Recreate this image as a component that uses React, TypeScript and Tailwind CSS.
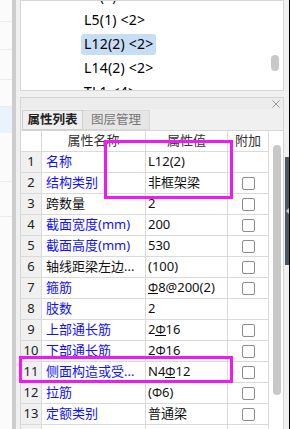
import React from "react";

type Row = { n: number; name: string; blue: boolean; value: React.ReactNode; cb: boolean };

const G = () => (
  <span className="inline-block leading-[11px] border-b border-black" style={{ fontSize: "12px" }}>Φ</span>
);
const P = () => <span style={{ fontSize: "12px" }}>Φ</span>;

const rows: Row[] = [
  { n: 1, name: "名称", blue: true, value: "L12(2)", cb: false },
  { n: 2, name: "结构类别", blue: true, value: "非框架梁", cb: true },
  { n: 3, name: "跨数量", blue: false, value: "2", cb: true },
  { n: 4, name: "截面宽度(mm)", blue: true, value: "200", cb: true },
  { n: 5, name: "截面高度(mm)", blue: true, value: "530", cb: true },
  { n: 6, name: "轴线距梁左边...", blue: false, value: "(100)", cb: true },
  { n: 7, name: "箍筋", blue: true, value: <><G />8@200(2)</>, cb: true },
  { n: 8, name: "肢数", blue: true, value: "2", cb: false },
  { n: 9, name: "上部通长筋", blue: true, value: <>2<G />16</>, cb: true },
  { n: 10, name: "下部通长筋", blue: true, value: <>2<G />16</>, cb: true },
  { n: 11, name: "侧面构造或受...", blue: true, value: <>N4<G />12</>, cb: true },
  { n: 12, name: "拉筋", blue: true, value: <>(<P />6)</>, cb: true },
  { n: 13, name: "定额类别", blue: true, value: "普通梁", cb: true },
  { n: 14, name: "", blue: false, value: "", cb: false },
];

const font = { fontFamily: '"Noto Sans", "Noto Sans CJK SC", sans-serif' };

export default function App() {
  return (
    <div className="relative w-[290px] h-[429px] overflow-hidden flex bg-[#f0f0f0] text-[13px] text-black" style={font}>
      {/* left strip */}
      <div className="flex w-[20px] h-full shrink-0">
        <div className="w-[12px] h-full bg-[#fbfbfb] flex flex-col">
          <div className="h-[22px] border-b border-[#ececec]" />
          <div className="h-[28px] border-b border-[#ececec]" />
          <div className="h-[30px] border-b border-[#ececec]" />
          <div className="h-[27px] border-b border-[#ececec]" />
          <div className="h-[26px] bg-[#eaf2fb]" />
          <div className="h-[49px] border-b border-[#ececec]" />
          <div className="h-[35px] border-b border-[#ececec]" />
        </div>
        <div className="w-[4px] h-full bg-[#cdcdcd]" />
        <div className="w-[4px] h-full bg-[#f0f0f0]" />
      </div>

      {/* main */}
      <div className="w-[264px] h-full shrink-0 flex flex-col">
        {/* top tree panel */}
        <div className="h-[91px] shrink-0 border border-[#d6d6d6] bg-white flex overflow-hidden">
          <div className="flex-1 flex flex-col mt-[-17px] pl-[60px] text-[14px]">
            {["L4(1) <2>", "L5(1) <2>", "L12(2) <2>", "L14(2) <2>", "TL1 <4>"].map((t, i) => (
              <div key={i} className="h-[24px] shrink-0 flex items-center">
                <span
                  className={
                    "h-[21px] flex items-center px-[3px] rounded-[3px] whitespace-pre leading-none tracking-[0.2px] " +
                    (i === 2 ? "bg-[#c7ddf4]" : "")
                  }
                >
                  {t}
                </span>
              </div>
            ))}
          </div>
          <div className="w-[12px] shrink-0 pt-[54px]">
            <div className="w-[8px] h-[16px] rounded-full bg-[#c8c8c8]" />
          </div>
        </div>

        <div className="h-[6px] shrink-0" />

        {/* bottom properties panel */}
        <div className="flex-1 flex flex-col border-x border-t border-[#d6d6d6] bg-white min-h-0">
          <div className="h-[11px] shrink-0 bg-[#ececec] flex justify-end items-center pr-[3px]">
            <svg width="8" height="8" viewBox="0 0 8 8" className="mt-[1px]">
              <path d="M0.5 0.5 L7.5 7.5 M7.5 0.5 L0.5 7.5" stroke="#9a9a9a" strokeWidth="1" />
            </svg>
          </div>
          <div className="h-[22px] shrink-0 bg-[#f0f0f0] flex items-start pl-[1px] border-b border-[#d6d6d6]">
            <div className="h-[20px] mt-[1px] w-[61px] flex items-center justify-center border border-[#cfcfcf] bg-[#f0f0f0] text-[12.5px] font-bold text-[#222]">
              属性列表
            </div>
            <div className="h-[20px] mt-[1px] w-[67px] flex items-center justify-center border-y border-r border-[#d8d8d8] bg-[#e6e6e6] text-[12.5px] text-[#777]">
              图层管理
            </div>
          </div>

          <div className="flex-1 flex min-h-0">
            <div className="w-[247px] shrink-0 flex flex-col">
              <div className="h-[21px] shrink-0 flex border-b border-[#dadada]">
                <div className="w-[21px] border-r border-[#dadada]" />
                <div className="w-[104px] border-r border-[#dadada] flex items-center justify-center text-[#333]">属性名称</div>
                <div className="w-[82px] border-r border-[#dadada] flex items-center justify-center text-[#333]">属性值</div>
                <div className="w-[40px] flex items-center justify-center text-[#333]">附加</div>
              </div>
              {rows.map((r) => (
                <div key={r.n} className="h-[21px] shrink-0 flex border-b border-[#dadada]">
                  <div className="w-[21px] border-r border-[#dadada] bg-[#f0f0f0] flex items-center justify-center text-[#222]">
                    {r.n <= 13 ? r.n : ""}
                  </div>
                  <div
                    className={
                      "w-[104px] border-r border-[#dadada] flex items-center pl-[4px] whitespace-nowrap overflow-hidden " +
                      (r.blue ? "text-[#1010ff]" : "text-[#111]")
                    }
                  >
                    {r.name}
                  </div>
                  <div className="w-[82px] border-r border-[#dadada] flex items-center pl-[2px] whitespace-nowrap text-[#111]">
                    {r.value}
                  </div>
                  <div className="w-[40px] flex items-center justify-center">
                    {r.cb && <div className="w-[13px] h-[13px] border border-[#8c8c8c] rounded-[2px] bg-white" />}
                  </div>
                </div>
              ))}
            </div>
            <div className="w-[15px] shrink-0 border-l border-[#dadada] pl-[4px] pt-[14px]">
              <div className="w-[8px] h-[250px] rounded-full bg-[#c8c8c8]" />
            </div>
          </div>
        </div>
      </div>

      {/* right edge */}
      <div className="w-[6px] h-full shrink-0 flex">
        <div className="w-[1px] h-full" />
        <div className="w-[4px] h-full flex flex-col pt-[157px]">
          <div className="h-[108px] w-full bg-[#4f5862] flex items-center justify-center">
            <svg width="3" height="6" viewBox="0 0 3 6">
              <path d="M3 0 L0 3 L3 6 Z" fill="#c8ccd0" />
            </svg>
          </div>
        </div>
        <div className="w-[1px] h-full bg-black" />
      </div>

      {/* annotation overlays */}
      <div className="absolute left-[104px] top-[140px] w-[129px] h-[59px] border-[3px] border-[#f218f2]" />
      <div className="absolute left-[19px] top-[356px] w-[214px] h-[27px] border-[3px] border-[#f218f2]" />
    </div>
  );
}
